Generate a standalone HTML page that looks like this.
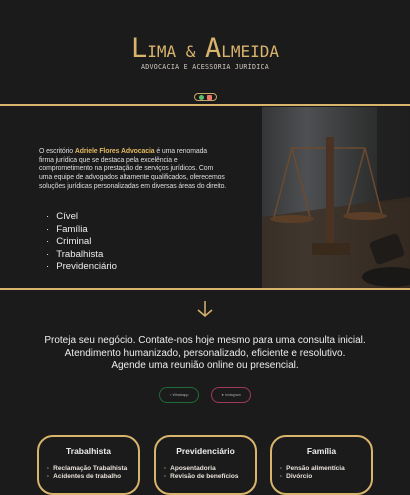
<!DOCTYPE html>
<html><head><meta charset="utf-8"><style>
*{margin:0;padding:0;box-sizing:border-box}
body{width:410px;height:481px;overflow:hidden;background:#1c1b1b;font-family:"Liberation Sans",sans-serif;color:#e8e4dc;position:relative}
.abs{position:absolute}
.title{left:0;width:410px;top:33px;text-align:center;font-family:"DejaVu Sans Mono","Liberation Mono",monospace;color:#d8b46c;font-size:16px;letter-spacing:0;font-weight:300}
.title b{font-size:27px;font-weight:300}
.sub{left:0;width:410px;top:63px;text-align:center;font-family:"DejaVu Sans Mono",monospace;font-size:6.6px;color:#cfcac0;letter-spacing:.3px}
.pill{left:194px;top:93px;width:23px;height:8px;border:1px solid #c8a868;border-radius:4px}
.line{left:0;width:410px;height:2px;background:#d8b46c}
.p{left:39px;top:148px;width:225px;font-size:6.9px;line-height:8.7px;color:#ddd;letter-spacing:-.1px;white-space:nowrap}
.p b{color:#e0b860}
ul{list-style:none}
.list{left:46px;top:211px;font-size:9.6px;line-height:12.5px;color:#eee}
.list li:before{content:"·";margin-right:7px}
.img{left:262px;top:107px;width:148px;height:181px;background:linear-gradient(90deg,#3a3b3c 0%,#5d6064 30%,#303131 75%,#222 100%)}
.cta{left:0;width:410px;top:335px;text-align:center;font-size:10px;line-height:12.5px;color:#eee}
.btn{top:387px;height:16px;border-radius:8px;font-size:3.5px;color:#aaa;text-align:center;line-height:14px}
.card{top:435px;width:103px;height:60px;border:2px solid #d8b46c;border-radius:16px}
.card h3{font-size:8.5px;text-align:center;margin-top:9px;color:#eee}
.card ul{margin:9px 0 0 8px;font-size:6.5px;line-height:8px;font-weight:bold;color:#e8e4dc}
.card li:before{content:"·";margin-right:4px}
</style></head><body>
<div class="abs title"><b>L</b>IMA &amp; <b>A</b>LMEIDA</div>
<div class="abs sub">ADVOCACIA E ACESSORIA JURÍDICA</div>
<div class="abs pill"><span class="abs" style="left:4px;top:1px;width:5px;height:5px;border-radius:50%;background:#5fbf6f"></span><span class="abs" style="left:12px;top:1px;width:5px;height:5px;background:#f07a6a;border-radius:1px"></span></div>
<div class="abs line" style="top:104px"></div>
<div class="abs p">O escritório <b>Adriele Flores Advocacia</b> é uma renomada<br>firma jurídica que se destaca pela excelência e<br>comprometimento na prestação de serviços jurídicos. Com<br>uma equipe de advogados altamente qualificados, oferecemos<br>soluções jurídicas personalizadas em diversas áreas do direito.</div>
<ul class="abs list"><li>Cível</li><li>Família</li><li>Criminal</li><li>Trabalhista</li><li>Previdenciário</li></ul>
<div class="abs img">
<svg width="148" height="181" viewBox="0 0 148 181"><rect x="0" y="0" width="148" height="181" fill="#2a2b2c" opacity=".3"/><rect x="115" y="0" width="33" height="95" fill="#1c1d1e" opacity=".7"/><path d="M0 110 L148 90 L148 181 L0 181Z" fill="#3a2c20" opacity=".7"/><g stroke="#6b4a30" fill="none" stroke-width="1.5"><line x1="30" y1="41" x2="103" y2="41"/><line x1="68" y1="32" x2="68" y2="140"/><path d="M30 41 L12 110 M30 41 L48 110 M103 41 L85 108 M103 41 L120 108"/></g><ellipse cx="30" cy="112" rx="22" ry="4" fill="#5a3e28"/><ellipse cx="103" cy="109" rx="22" ry="4" fill="#5a3e28"/><rect x="64" y="30" width="8" height="110" fill="#4a3322"/><rect x="50" y="136" width="38" height="12" fill="#3a2a1c"/><rect x="110" y="130" width="30" height="24" rx="4" fill="#1e1b18" transform="rotate(-20 125 142)"/><ellipse cx="130" cy="170" rx="30" ry="10" fill="#1a1816"/></svg>
</div>
<div class="abs line" style="top:288px"></div>
<svg class="abs" style="left:196px;top:300px" width="18" height="18" viewBox="0 0 18 18"><path d="M9 1V16M2 10L9 16L16 10" stroke="#d8b46c" stroke-width="1.5" fill="none"/></svg>
<div class="abs cta">Proteja seu negócio. Contate-nos hoje mesmo para uma consulta inicial.<br>Atendimento humanizado, personalizado, eficiente e resolutivo.<br>Agende uma reunião online ou presencial.</div>
<div class="abs btn" style="left:159px;width:40px;border:1px solid #1f6b3a">○ Whatsapp</div>
<div class="abs btn" style="left:211px;width:40px;border:1px solid #a03a5a">➤ Instagram</div>
<div class="abs card" style="left:37px"><h3>Trabalhista</h3><ul><li>Reclamação Trabalhista</li><li>Acidentes de trabalho</li></ul></div>
<div class="abs card" style="left:154px"><h3>Previdenciário</h3><ul><li>Aposentadoria</li><li>Revisão de benefícios</li></ul></div>
<div class="abs card" style="left:270px"><h3>Família</h3><ul><li>Pensão alimentícia</li><li>Divórcio</li></ul></div>
</body></html>
